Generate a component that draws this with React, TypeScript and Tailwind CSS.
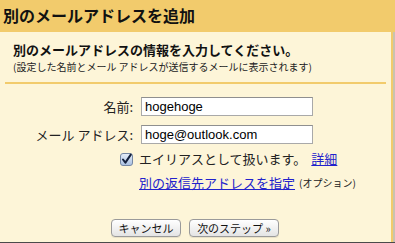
import React from 'react';

const jp = { fontFamily: '"Noto Sans CJK JP", "Liberation Sans", sans-serif' };

// チェックボックス（Mac風）
const CheckIcon = () => (
  <svg width="13" height="13" viewBox="0 0 13 13">
    <defs>
      <linearGradient id="cb" x1="0" y1="0" x2="0" y2="1">
        <stop offset="0" stopColor="#e6eef9" />
        <stop offset="1" stopColor="#a9c0e2" />
      </linearGradient>
    </defs>
    <rect x="0.5" y="0.5" width="12" height="12" rx="2.5" fill="url(#cb)" stroke="#7587a3" />
    <path d="M3 6.5 L5.4 9.6 L10.8 1.6" fill="none" stroke="#14213d" strokeWidth="2" strokeLinecap="round" strokeLinejoin="round" />
  </svg>
);

const Button = ({ children, w }: { children: React.ReactNode; w: string }) => (
  <button
    className={`${w} h-[18px] rounded-[4px] border border-[#9a9a9a] bg-gradient-to-b from-white to-[#e4e4e4] text-[11px] leading-[16px] text-[#111] shadow-[0_1px_0_rgba(0,0,0,0.08)]`}
    style={jp}
  >
    {children}
  </button>
);

export default function App() {
  return (
    <div className="w-[395px] h-[243px] flex flex-col bg-[#f2cb6c] overflow-hidden" style={jp}>
      <div className="h-[32px] shrink-0 flex items-center pl-[3px] pb-[3px]">
        <h1 className="text-[16px] font-bold leading-[20px] text-[#111]">別のメールアドレスを追加</h1>
      </div>

      <div className="flex flex-1">
        <div className="w-[391px] bg-[#fdf5d8] flex flex-col text-[#222]">
          <div className="pl-[13px] pt-[10px]">
            <h2 className="text-[13px] font-bold leading-[16px] text-[#111]">
              別のメールアドレスの情報を入力してください。
            </h2>
            <p className="mt-[2px] text-[10px] leading-[13px]">
              (設定した名前とメール アドレスが送信するメールに表示されます)
            </p>
          </div>

          <div className="mx-[5px] mt-[9px] h-[2px] bg-[#f2cb6c]" />

          <div className="mt-[13px] flex flex-col gap-[9px]">
            <div className="flex items-center">
              <label className="w-[133px] text-right text-[13px] leading-[16px]">名前:</label>
              <input
                readOnly
                value="hogehoge"
                className="ml-[8px] w-[172px] h-[19px] border border-[#a9a9a9] border-t-[#8f8f8f] bg-white pl-[3px] text-[13px] text-black outline-none"
                style={{ fontFamily: '"Liberation Sans", Arial, sans-serif' }}
              />
            </div>
            <div className="flex items-center">
              <label className="w-[133px] text-right text-[13px] leading-[16px]">メール アドレス:</label>
              <input
                readOnly
                value="hoge@outlook.com"
                className="ml-[8px] w-[172px] h-[19px] border border-[#a9a9a9] border-t-[#8f8f8f] bg-white pl-[3px] text-[13px] text-black outline-none"
                style={{ fontFamily: '"Liberation Sans", Arial, sans-serif' }}
              />
            </div>
          </div>

          <div className="mt-[7px] h-[16px] flex items-center pl-[120px]">
            <CheckIcon />
            <span className="ml-[6px] text-[13px] leading-[16px]">エイリアスとして扱います。</span>
            <a className="ml-[5px] text-[13px] leading-[16px] text-[#2222cc] underline">詳細</a>
          </div>

          <div className="mt-[8px] h-[16px] flex items-center pl-[139px]">
            <a className="text-[13px] leading-[16px] text-[#2222cc] underline">別の返信先アドレスを指定</a>
            <span className="ml-[4px] text-[10px] leading-[16px]">(オプション)</span>
          </div>

          <div className="mt-[28px] flex gap-[8px] pl-[111px]">
            <Button w="w-[70px]">キャンセル</Button>
            <Button w="w-[90px]">次のステップ »</Button>
          </div>
        </div>
        <div className="w-[2px]" />
        <div className="w-[2px] bg-[#c9c3b0]" />
      </div>

      <div className="h-[1px] shrink-0 bg-[#4a4a4a]" />
    </div>
  );
}
